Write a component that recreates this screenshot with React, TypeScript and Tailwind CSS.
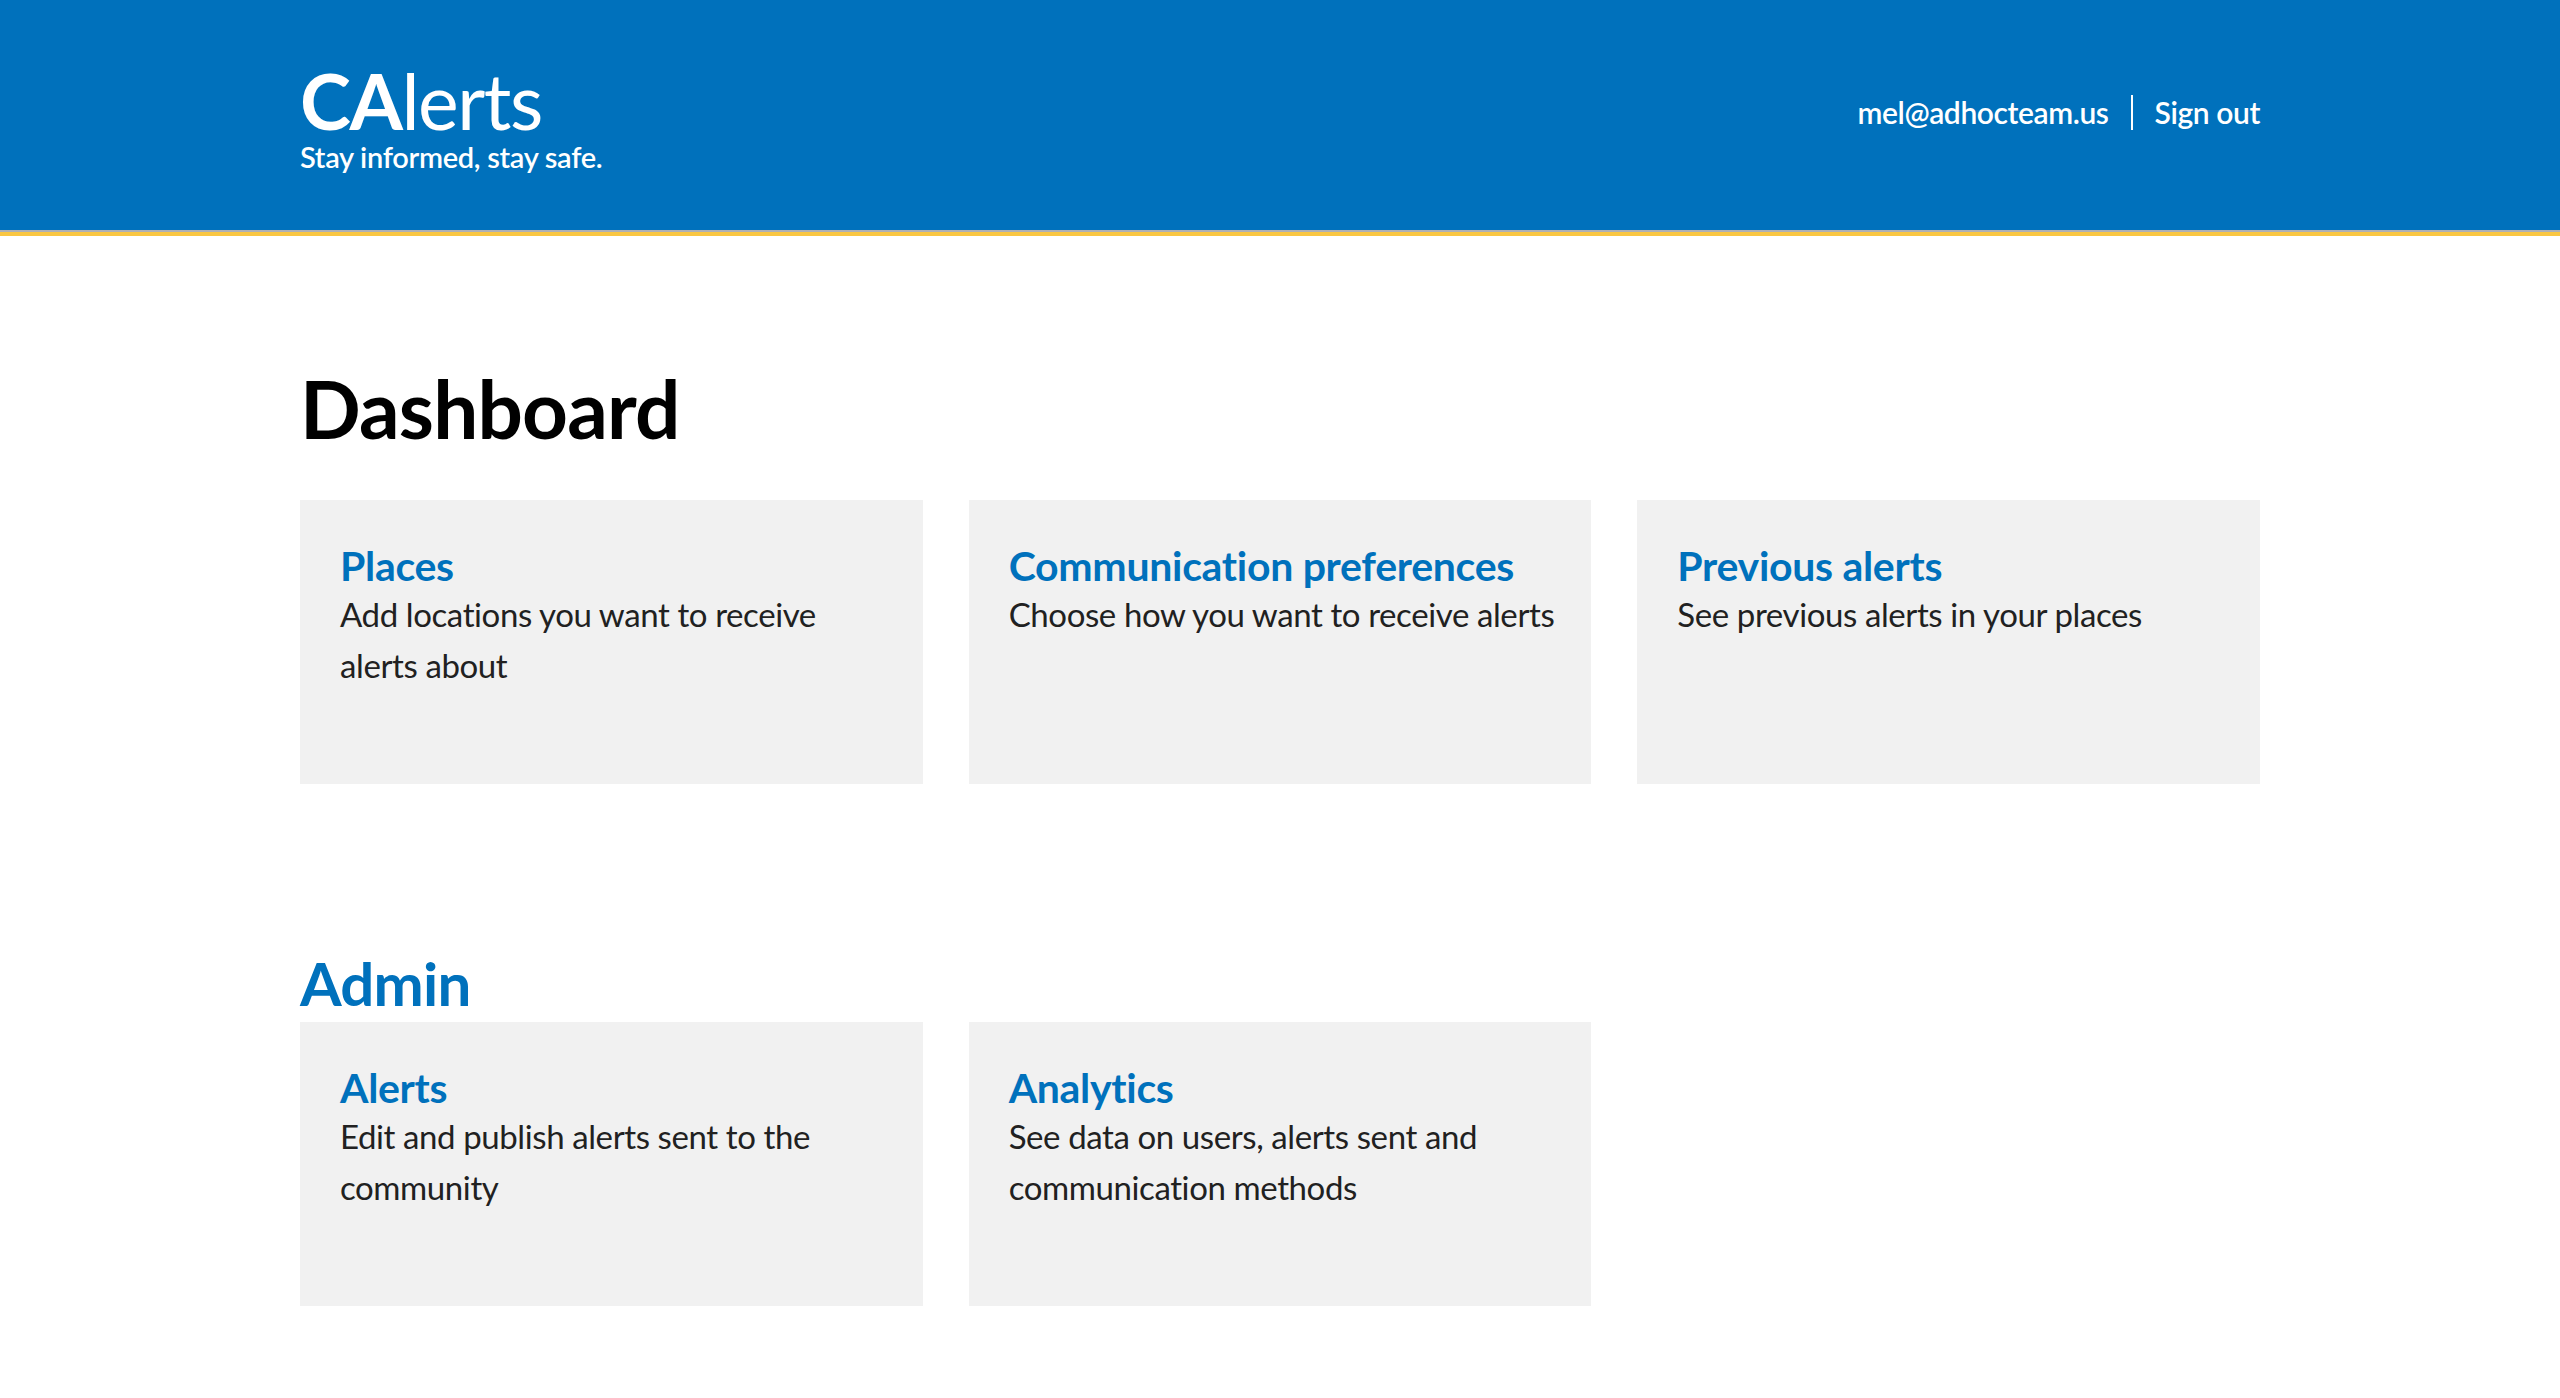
import React from "react";

const font = { fontFamily: '"Lato", "Open Sans", sans-serif' };

function Card({ title, desc }: { title: string; desc: string }) {
  return (
    <a href="#" className="block bg-[#f1f1f1] h-[284px] pl-10 pr-8 pt-10 no-underline">
      <h3 className="text-[41px] leading-[52px] font-bold text-[#0071bc] tracking-[-0.3px]">{title}</h3>
      <p className="text-[33px] leading-[51px] text-[#212121] tracking-[-0.4px] -mt-[3px]">{desc}</p>
    </a>
  );
}

export default function App() {
  return (
    <div className="min-h-[1398px] bg-white" style={font}>
      <header className="bg-[#0071bc]">
        <div className="mx-auto w-[1960px] h-[230px] flex items-center justify-between">
          <div className="text-white pt-[2px]">
            <div className="text-[77px] leading-[80px] tracking-[-1.5px] mt-[2px]">
              <span className="font-bold">CA</span>
              <span>lerts</span>
            </div>
            <div className="text-[29px] leading-[34px] font-semibold tracking-[-0.3px]">
              Stay informed, stay safe.
            </div>
          </div>
          <div className="flex items-center text-white text-[30px] font-semibold tracking-[-0.4px] mb-[6px]">
            <span>mel@adhocteam.us</span>
            <span className="mx-[22px] w-[2px] h-[35px] bg-white"></span>
            <span>Sign out</span>
          </div>
        </div>
      </header>
      <div className="h-[2px] bg-[#aeb0b5]"></div>
      <div className="h-[4px] bg-[#f9c642]"></div>
      <main className="mx-auto w-[1960px] pt-[117px]">
        <h1 className="text-[80px] leading-[110px] font-bold text-black tracking-[-0.8px]">Dashboard</h1>
        <div className="grid grid-cols-3 gap-x-[46px] mt-[37px]">
          <Card title="Places" desc="Add locations you want to receive alerts about" />
          <Card title="Communication preferences" desc="Choose how you want to receive alerts" />
          <Card title="Previous alerts" desc="See previous alerts in your places" />
        </div>
        <h2 className="mt-[160px] text-[60px] leading-[78px] font-bold text-[#0071bc] tracking-[-0.8px]">Admin</h2>
        <div className="grid grid-cols-3 gap-x-[46px]">
          <Card title="Alerts" desc="Edit and publish alerts sent to the community" />
          <Card title="Analytics" desc="See data on users, alerts sent and communication methods" />
        </div>
      </main>
    </div>
  );
}
